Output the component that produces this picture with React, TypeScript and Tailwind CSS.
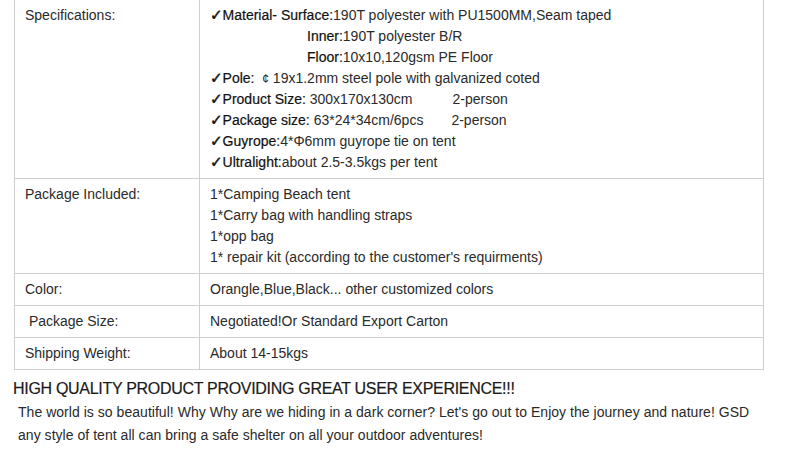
import React from "react";

const Label = ({ children }: { children: React.ReactNode }) => (
  <span className="text-[#111] [-webkit-text-stroke:0.2px_#111]">{children}</span>
);

const Check = () => (
  <span className="font-['DejaVu_Sans',sans-serif] text-[15px] leading-[0] text-[#111] [-webkit-text-stroke:0.5px_#111]">✓</span>
);

function Row({
  label,
  children,
}: {
  label: React.ReactNode;
  children: React.ReactNode;
}) {
  return (
    <div className="flex border-b border-[#cfcfcf]">
      <div className="w-[185px] shrink-0 border-r border-[#cfcfcf] pl-[10px] py-[5px]">{label}</div>
      <div className="flex-1 pl-[10px] py-[5px]">{children}</div>
    </div>
  );
}

export default function App() {
  return (
    <div className="w-[810px] h-[454px] overflow-hidden bg-white text-[#2a2a2a] font-['Liberation_Sans',Arial,sans-serif] text-[14px] leading-[21px]">
      <div className="ml-[14px] w-[750px] border-x border-[#cfcfcf]">
        <Row label="Specifications:">
          <div>
            <Check />
            <Label>Material- Surface:</Label>190T polyester with PU1500MM,Seam taped
          </div>
          <div className="pl-[97px]">
            <Label>Inner:</Label>190T polyester B/R
          </div>
          <div className="pl-[97px]">
            <Label>Floor:</Label>10x10,120gsm PE Floor
          </div>
          <div>
            <Check />
            <Label>Pole:</Label>
            {"\u00a0 "}
            <span className="text-[12px] leading-[0]">¢</span> 19x1.2mm steel pole with galvanized coted
          </div>
          <div>
            <Check />
            <Label>Product Size:</Label> 300x170x130cm
            <span className="ml-[40px]">2-person</span>
          </div>
          <div>
            <Check />
            <Label>Package size:</Label> 63*24*34cm/6pcs
            <span className="ml-[28px]">2-person</span>
          </div>
          <div>
            <Check />
            <Label>Guyrope:</Label>4*Φ6mm guyrope tie on tent
          </div>
          <div>
            <Check />
            <Label>Ultralight:</Label>about 2.5-3.5kgs per tent
          </div>
        </Row>
        <Row label="Package Included:">
          <div>1*Camping Beach tent</div>
          <div>1*Carry bag with handling straps</div>
          <div>1*opp bag</div>
          <div>1* repair kit (according to the customer's requirments)</div>
        </Row>
        <Row label="Color:">
          <div>Orangle,Blue,Black... other customized colors</div>
        </Row>
        <Row label={"\u00a0Package Size:"}>
          <div>Negotiated!Or Standard Export Carton</div>
        </Row>
        <Row label="Shipping Weight:">
          <div>About 14-15kgs</div>
        </Row>
      </div>
      <div className="ml-[13px] mt-[7px]">
        <h2 className="text-[16px] leading-[24px] tracking-[-0.3px] text-[#1a1a1a] [-webkit-text-stroke:0.2px_#1a1a1a]">
          HIGH QUALITY PRODUCT PROVIDING GREAT USER EXPERIENCE!!!
        </h2>
        <p className="pl-[5px] text-[14px] leading-[23px] tracking-[0.035px] text-[#2a2a2a] whitespace-nowrap">
          The world is so beautiful! Why Why are we hiding in a dark corner? Let's go out to Enjoy the journey and nature! GSD
          <br />
          any style of tent all can bring a safe shelter on all your outdoor adventures!
        </p>
      </div>
    </div>
  );
}
